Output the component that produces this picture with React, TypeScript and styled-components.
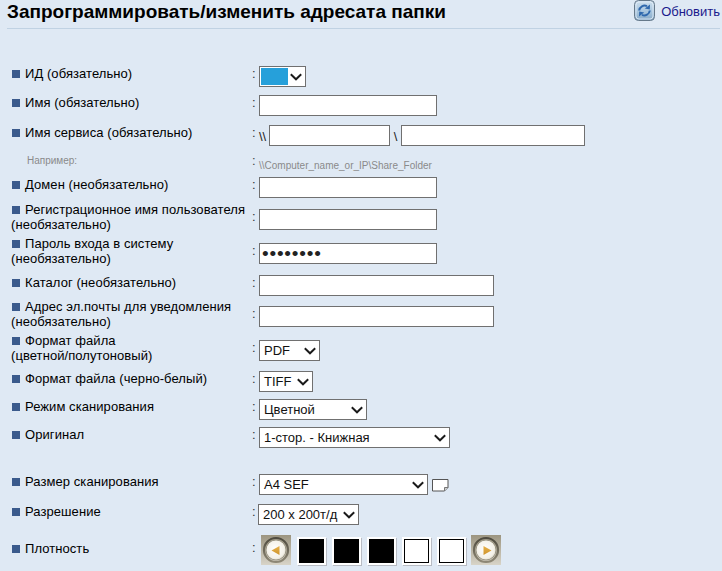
import * as React from "react";
import styled, { createGlobalStyle } from "styled-components";

const GlobalStyle = createGlobalStyle`
  html, body {
    margin: 0;
    height: 100%;
    overflow: hidden;
    background: #dfe9f4;
    font-family: "Liberation Sans", Arial, sans-serif;
    color: #000;
  }
`;

const Chevron = () => (
  <ChevronSvg width="12" height="8" viewBox="0 0 12 8">
    <path d="M0.8 1.2 L6 6.3 L11.2 1.2" fill="none" stroke="#1a1a1a" strokeWidth="1.9" />
  </ChevronSvg>
);

const RefreshIcon = () => (
  <svg width="22" height="22" viewBox="0 0 22 22">
    <defs>
      <linearGradient id="refreshBg" x1="0" y1="0" x2="0" y2="1">
        <stop offset="0" stopColor="#cfe0ef" />
        <stop offset="0.6" stopColor="#a3c2dc" />
        <stop offset="1" stopColor="#86a8c6" />
      </linearGradient>
    </defs>
    <rect x="0.5" y="0.5" width="20" height="20" rx="4" fill="url(#refreshBg)" stroke="#66798a" />
    <rect x="2" y="2" width="17" height="17" rx="3" fill="none" stroke="#e4edf6" strokeWidth="0.8" />
    <path d="M5.2 10.5 A5.4 5.4 0 0 1 13 6.2" fill="none" stroke="#2f68ad" strokeWidth="2" />
    <path d="M16 4.4 L15.8 9.6 L10.8 8.6 Z" fill="#2f68ad" />
    <g transform="rotate(180 10.5 10.5)">
      <path d="M5.2 10.5 A5.4 5.4 0 0 1 13 6.2" fill="none" stroke="#2f68ad" strokeWidth="2" />
      <path d="M16 4.4 L15.8 9.6 L10.8 8.6 Z" fill="#2f68ad" />
    </g>
  </svg>
);

const ArrowButton = ({ dir }: { dir: "left" | "right" }) => (
  <svg width="30" height="30" viewBox="0 0 30 30">
    <defs>
      <linearGradient id={`tile-${dir}`} x1="0" y1="0" x2="0" y2="1">
        <stop offset="0" stopColor="#9c9580" />
        <stop offset="1" stopColor="#d8d4c8" />
      </linearGradient>
      <linearGradient id={`ring-${dir}`} x1="0" y1="0" x2="0" y2="1">
        <stop offset="0" stopColor="#4e4a3e" />
        <stop offset="1" stopColor="#8e8876" />
      </linearGradient>
      <radialGradient id={`face-${dir}`} cx="0.45" cy="0.45" r="0.65">
        <stop offset="0" stopColor="#ffffff" />
        <stop offset="0.7" stopColor="#f4f1e8" />
        <stop offset="1" stopColor="#cfc9b8" />
      </radialGradient>
      <linearGradient id={`gold-${dir}`} x1="0" y1="0" x2="0" y2="1">
        <stop offset="0" stopColor="#e6b04a" />
        <stop offset="1" stopColor="#cf952c" />
      </linearGradient>
    </defs>
    <rect width="30" height="30" fill={`url(#tile-${dir})`} />
    <circle cx="15" cy="15" r="12" fill="none" stroke={`url(#ring-${dir})`} strokeWidth="2.2" />
    <circle cx="15" cy="15" r="10" fill={`url(#face-${dir})`} stroke="#8d8876" strokeWidth="0.8" />
    {dir === "left" ? (
      <path d="M10.5 15.5 L18.5 11 L18.5 20 Z" fill={`url(#gold-${dir})`} />
    ) : (
      <path d="M20.5 15.5 L12.5 11 L12.5 20 Z" fill={`url(#gold-${dir})`} />
    )}
  </svg>
);

const PaperIcon = () => (
  <PaperSvg width="17" height="13" viewBox="0 0 17 13">
    <path d="M0.5 0.5 H16 V8.5 L12.5 12 H0.5 Z" fill="#fff" stroke="#555" />
    <path d="M16 8.5 H12.5 V12" fill="#ccc" stroke="#777" />
  </PaperSvg>
);

type SelectProps = { width: number; children?: React.ReactNode; offset?: number };

const FakeSelect = ({ width, children, offset }: SelectProps) => (
  <SelectBox $width={width} $offset={offset}>
    {children}
    <Chevron />
  </SelectBox>
);

export default function App() {
  return (
    <Page>
      <GlobalStyle />
      <Header>
        <Title>Запрограммировать/изменить адресата папки</Title>
        <RefreshLink>
          <RefreshIcon />
          Обновить
        </RefreshLink>
      </Header>
      <Form>
        <Row $gap={0}>
          <Label><Bullet />ИД (обязательно)</Label>
          <Colon>:</Colon>
          <Value>
            <FakeSelect width={47}><IdSwatch /></FakeSelect>
          </Value>
        </Row>
        <Row $gap={8}>
          <Label><Bullet />Имя (обязательно)</Label>
          <Colon>:</Colon>
          <Value><Field $width={178} readOnly /></Value>
        </Row>
        <Row $gap={9}>
          <Label><Bullet />Имя сервиса (обязательно)</Label>
          <Colon>:</Colon>
          <Value>
            <Slash>\\</Slash>
            <Field $width={121} readOnly />
            <Slash $single>\</Slash>
            <Field $width={184} readOnly />
          </Value>
        </Row>
        <HintRow>
          <HintLabel>Например:</HintLabel>
          <HintColon>:</HintColon>
          <HintValue>\\Computer_name_or_IP\Share_Folder</HintValue>
        </HintRow>
        <Row $gap={10}>
          <Label><Bullet />Домен (необязательно)</Label>
          <Colon>:</Colon>
          <Value><Field $width={178} readOnly /></Value>
        </Row>
        <Row $gap={11}>
          <Label><Bullet />Регистрационное имя пользователя (необязательно)</Label>
          <Colon>:</Colon>
          <Value><Field $width={178} readOnly /></Value>
        </Row>
        <Row $gap={13}>
          <Label><Bullet />Пароль входа в систему<br />(необязательно)</Label>
          <Colon>:</Colon>
          <Value><PasswordField $width={178} type="password" value="12345678" readOnly /></Value>
        </Row>
        <Row $gap={11}>
          <Label><Bullet />Каталог (необязательно)</Label>
          <Colon>:</Colon>
          <Value><Field $width={235} readOnly /></Value>
        </Row>
        <Row $gap={10}>
          <Label><Bullet />Адрес эл.почты для уведомления (необязательно)</Label>
          <Colon>:</Colon>
          <Value><Field $width={235} readOnly /></Value>
        </Row>
        <Row $gap={13}>
          <Label><Bullet />Формат файла<br />(цветной/полутоновый)</Label>
          <Colon>:</Colon>
          <Value><FakeSelect width={61}>PDF</FakeSelect></Value>
        </Row>
        <Row $gap={10}>
          <Label><Bullet />Формат файла (черно-белый)</Label>
          <Colon>:</Colon>
          <Value><FakeSelect width={54}>TIFF</FakeSelect></Value>
        </Row>
        <Row $gap={7}>
          <Label><Bullet />Режим сканирования</Label>
          <Colon>:</Colon>
          <Value><FakeSelect width={108}>Цветной</FakeSelect></Value>
        </Row>
        <Row $gap={7}>
          <Label><Bullet />Оригинал</Label>
          <Colon>:</Colon>
          <Value><FakeSelect width={191}>1-стор. - Книжная</FakeSelect></Value>
        </Row>
        <Row $gap={26}>
          <Label><Bullet />Размер сканирования</Label>
          <Colon>:</Colon>
          <Value>
            <FakeSelect width={169}>A4 SEF</FakeSelect>
            <PaperIcon />
          </Value>
        </Row>
        <Row $gap={9}>
          <Label><Bullet />Разрешение</Label>
          <Colon>:</Colon>
          <Value><FakeSelect width={101} offset={-1}>200 x 200т/д</FakeSelect></Value>
        </Row>
        <DensityRow $gap={10}>
          <DensityLabel><Bullet />Плотность</DensityLabel>
          <Colon>:</Colon>
          <DensityValue>
            <ArrowButton dir="left" />
            <DensityBoxes>
              <DensityBox $filled />
              <DensityBox $filled />
              <DensityBox $filled />
              <DensityBox />
              <DensityBox />
            </DensityBoxes>
            <ArrowButton dir="right" />
          </DensityValue>
        </DensityRow>
      </Form>
    </Page>
  );
}

const Page = styled.div`
  width: 722px;
  height: 571px;
  overflow: hidden;
  box-sizing: border-box;
`;

const Header = styled.div`
  display: flex;
  justify-content: space-between;
  align-items: flex-start;
  height: 28px;
  margin: 0 2px 0 7px;
  border-bottom: 1px solid #c0d2e3;
`;

const Title = styled.h1`
  margin: 0;
  padding-top: 1px;
  font-size: 19px;
  line-height: 21px;
  font-weight: 700;
`;

const RefreshLink = styled.a`
  display: flex;
  align-items: center;
  gap: 5px;
  height: 20px;
  margin-top: 1px;
  font-size: 13px;
  color: #1a1a8c;
`;

const Form = styled.div`
  padding-top: 37px;
`;

const Row = styled.div<{ $gap: number }>`
  display: grid;
  grid-template-columns: 240px 8px 1fr;
  grid-template-rows: 21px;
  align-items: center;
  height: 21px;
  margin-top: ${(p) => p.$gap}px;
  padding-left: 11px;
`;

const Label = styled.div`
  font-size: 13px;
  line-height: 15px;
  letter-spacing: 0.07px;
  width: 240px;
  padding-bottom: 6px;
`;

const Bullet = styled.span`
  display: inline-block;
  width: 8px;
  height: 8px;
  margin: 0 5px 0 1px;
  background: #3a5a8c;
`;

const Colon = styled.div`
  font-size: 13px;
  line-height: 15px;
  padding: 0 0 6px 1px;
  color: #333;
`;

const Value = styled.div`
  display: flex;
  align-items: center;
`;

const Field = styled.input<{ $width: number }>`
  box-sizing: border-box;
  width: ${(p) => p.$width}px;
  height: 21px;
  margin: 0;
  padding: 0 2px;
  border: 1px solid #707070;
  border-radius: 0;
  outline: none;
  background: #fff;
  font-family: "Liberation Sans", Arial, sans-serif;
  font-size: 12px;
  color: #222;
`;

const PasswordField = styled(Field)`
  font-size: 19px;
  letter-spacing: 0.8px;
`;

const Slash = styled.span<{ $single?: boolean }>`
  width: ${(p) => (p.$single ? 11 : 10)}px;
  padding-top: 2px;
  font-size: 13px;
  color: #222;
  text-align: ${(p) => (p.$single ? "center" : "left")};
`;

const HintRow = styled.div`
  display: grid;
  grid-template-columns: 224px 8px 1fr;
  align-items: center;
  height: 14px;
  margin-top: 7px;
  padding-left: 27px;
  color: #8a8a8a;
`;

const HintLabel = styled.div`
  font-size: 10px;
  padding-bottom: 4px;
`;

const HintColon = styled.div`
  font-size: 13px;
  line-height: 15px;
  color: #444;
  padding: 0 0 3px 1px;
`;

const HintValue = styled.div`
  font-size: 10px;
  padding-top: 6px;
  white-space: nowrap;
`;

const SelectBox = styled.div<{ $width: number; $offset?: number }>`
  box-sizing: border-box;
  display: flex;
  align-items: center;
  justify-content: space-between;
  width: ${(p) => p.$width}px;
  height: 21px;
  margin-left: ${(p) => p.$offset ?? 0}px;
  padding: 0 3px 0 4px;
  border: 1px solid #707070;
  background: #fff;
  font-size: 13px;
  color: #111;
  white-space: nowrap;
`;

const ChevronSvg = styled.svg`
  flex: none;
`;

const PaperSvg = styled.svg`
  margin: 1px 0 0 4px;
`;

const IdSwatch = styled.span`
  display: block;
  width: 27px;
  height: 17px;
  margin-left: -3px;
  background: #26a0da;
`;

const DensityRow = styled(Row)`
  grid-template-rows: 30px;
  height: 30px;
`;

const DensityLabel = styled(Label)`
  padding-bottom: 4px;
`;

const DensityValue = styled(Value)`
  margin-left: 2px;
  gap: 5px;
`;

const DensityBoxes = styled.div`
  display: flex;
  gap: 6px;
  margin: 1px 0 0 1px;
`;

const DensityBox = styled.div<{ $filled?: boolean }>`
  box-sizing: border-box;
  width: 29px;
  height: 28px;
  border: 2px solid #fff;
  background: ${(p) => (p.$filled ? "#000" : "#fff")};
  box-shadow: ${(p) => (p.$filled ? "" : "inset 0 0 0 1px #000,")} 1px 1px 0 #b8bcc4;
`;
